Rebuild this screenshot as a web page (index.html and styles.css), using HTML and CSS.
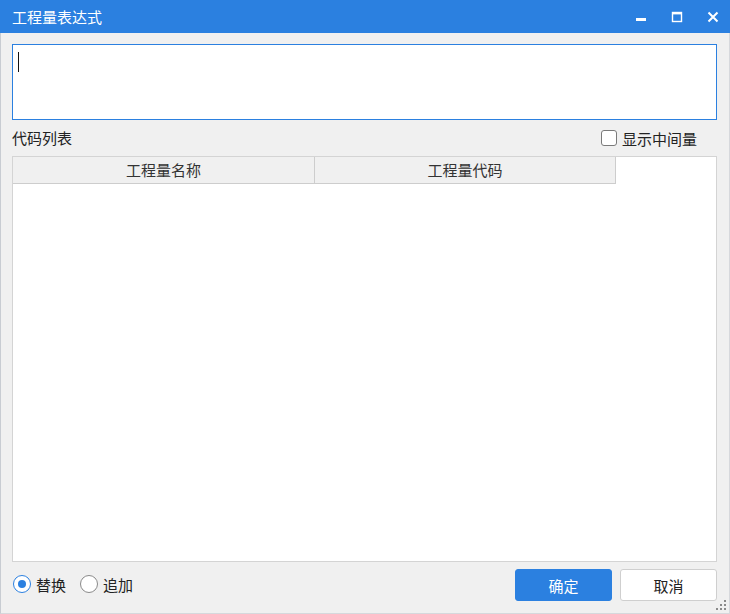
FILE: index.html
```html
<!DOCTYPE html>
<html lang="zh">
<head>
<meta charset="utf-8">
<link rel="stylesheet" href="styles.css">
</head>
<body>
<div class="window">
  <div class="titlebar">
    <span class="title">工程量表达式</span>
    <div class="controls">
      <span class="ctl ctl-min"><svg width="12" height="12" viewBox="0 0 12 12"><rect x="1" y="7" width="10" height="3" fill="#fff"/></svg></span>
      <span class="ctl ctl-max"><svg width="12" height="12" viewBox="0 0 12 12"><rect x="1.5" y="1.5" width="9" height="9" fill="none" stroke="#fff" stroke-width="1.4"/><rect x="1" y="1" width="10" height="2.4" fill="#fff"/></svg></span>
      <span class="ctl ctl-close"><svg width="12" height="12" viewBox="0 0 12 12"><path d="M1.5 1.5 L10.5 10.5 M10.5 1.5 L1.5 10.5" stroke="#fff" stroke-width="2"/></svg></span>
    </div>
  </div>
  <div class="content">
    <div class="editor"><span class="caret"></span></div>
    <div class="label-row">
      <span class="label">代码列表</span>
      <label class="check"><span class="box"></span><span>显示中间量</span></label>
    </div>
    <div class="table">
      <div class="thead">
        <div class="th th1">工程量名称</div>
        <div class="th th2">工程量代码</div>
      </div>
    </div>
    <div class="footer">
      <div class="radios">
        <label class="radio"><span class="dot checked"></span><span>替换</span></label>
        <label class="radio"><span class="dot"></span><span>追加</span></label>
      </div>
      <div class="buttons">
        <button class="btn primary">确定</button>
        <button class="btn">取消</button>
      </div>
    </div>
  </div>
  <svg class="grip" width="12" height="12" viewBox="0 0 12 12">
    <rect x="9" y="1" width="2" height="2" fill="#8a8a8a"/>
    <rect x="5" y="5" width="2" height="2" fill="#8a8a8a"/>
    <rect x="9" y="5" width="2" height="2" fill="#8a8a8a"/>
    <rect x="1" y="9" width="2" height="2" fill="#8a8a8a"/>
    <rect x="5" y="9" width="2" height="2" fill="#8a8a8a"/>
    <rect x="9" y="9" width="2" height="2" fill="#8a8a8a"/>
  </svg>
</div>
</body>
</html>
```
FILE: styles.css
```css
* { box-sizing: border-box; }
html, body { margin: 0; padding: 0; }
body {
  width: 730px;
  height: 614px;
  font-family: "Noto Sans CJK SC", "Noto Sans", sans-serif;
  font-size: 15px;
  color: #222;
  background: #f0f0f0;
}
.window {
  position: relative;
  width: 730px;
  height: 614px;
  display: flex;
  flex-direction: column;
  background: #f0f0f0;
  border-left: 1px solid #c8ccd2;
  border-right: 1px solid #d6d8dc;
  border-bottom: 1px solid #d6d8dc;
}
.titlebar {
  height: 33px;
  margin-left: -1px;
  margin-right: -1px;
  background: #2b80e0;
  color: #fff;
  display: flex;
  align-items: center;
  justify-content: space-between;
  padding-left: 12px;
  flex: none;
}
.title { font-size: 15px; line-height: 20px; }
.controls { display: flex; align-items: center; padding-right: 11px; gap: 24px; }
.ctl { width: 12px; height: 12px; display: flex; }
.ctl svg { display: block; }
.content {
  flex: 1;
  display: flex;
  flex-direction: column;
  padding: 11px 12px 0 11px;
}
.editor {
  height: 76px;
  background: #fff;
  border: 1px solid #2b80e0;
  padding: 7px 5px;
  flex: none;
}
.caret {
  display: block;
  width: 1px;
  height: 20px;
  background: #111;
}
.label-row {
  height: 36px;
  display: flex;
  align-items: center;
  justify-content: space-between;
  flex: none;
}
.label { line-height: 20px; }
.check { display: flex; align-items: center; gap: 5px; margin-right: 20px; }
.box {
  width: 16px;
  height: 16px;
  border: 1px solid #7a7a7a;
  border-radius: 3px;
  background: #fff;
  margin-left: -1px;
}
.table {
  height: 406px;
  background: #fff;
  border: 1px solid #d4d4d4;
  flex: none;
}
.thead { display: flex; height: 27px; }
.th {
  width: 302px;
  height: 27px;
  background: #f0f0f0;
  border-right: 1px solid #cdcdcd;
  border-bottom: 1px solid #cdcdcd;
  display: flex;
  align-items: center;
  justify-content: center;
  color: #333;
  line-height: 20px;
  padding-bottom: 1px;
}
.th2 { width: 301px; }
.footer {
  flex: 1;
  display: flex;
  align-items: flex-start;
  justify-content: space-between;
  padding-top: 7px;
}
.radios { display: flex; align-items: center; height: 28px; margin-top: 1px; gap: 14px; padding-left: 1px; }
.radio { display: flex; align-items: center; gap: 5px; }
.dot {
  width: 18px;
  height: 18px;
  border-radius: 50%;
  border: 1px solid #8a8a8a;
  background: #fff;
  position: relative;
}
.dot.checked { border-color: #2b80e0; }
.dot.checked::after {
  content: "";
  position: absolute;
  left: 4px;
  top: 4px;
  width: 8px;
  height: 8px;
  border-radius: 50%;
  background: #2b80e0;
}
.buttons { display: flex; gap: 8px; }
.btn {
  width: 97px;
  height: 32px;
  border: 1px solid #cfcfcf;
  border-radius: 3px;
  background: #fff;
  font-family: inherit;
  font-size: 15px;
  color: #222;
  padding: 0;
}
.btn.primary {
  background: #2b80e0;
  border-color: #2b80e0;
  color: #fff;
}
.grip { position: absolute; right: 2px; bottom: 2px; }
```
